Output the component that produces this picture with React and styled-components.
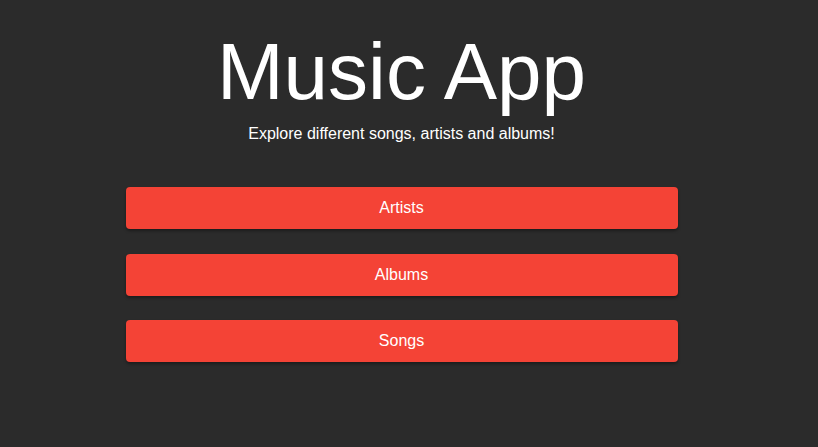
import React from "react";
import styled, { createGlobalStyle } from "styled-components";

const GlobalStyle = createGlobalStyle`
  html, body {
    margin: 0;
    padding: 0;
    background: #2b2b2b;
  }
  body {
    font-family: "Liberation Sans", Arial, sans-serif;
    color: #ffffff;
    min-height: 447px;
  }
`;

const Page = styled.main`
  width: 803px;
  padding-top: 26px;
  display: flex;
  flex-direction: column;
  align-items: center;
`;

const Title = styled.h1`
  margin: 0;
  font-size: 80px;
  font-weight: 400;
  line-height: normal;
  color: #ffffff;
`;

const Subtitle = styled.p`
  margin: 7px 0 0;
  font-size: 16px;
  line-height: normal;
  color: #ffffff;
`;

const Menu = styled.nav`
  width: 552px;
  margin-top: 44px;
  display: flex;
  flex-direction: column;
  gap: 24.5px;
`;

const MenuButton = styled.button`
  height: 42px;
  border: none;
  border-radius: 4px;
  background: #f44336;
  color: #ffffff;
  font-family: "Liberation Sans", Arial, sans-serif;
  font-size: 16px;
  box-shadow: 0 2px 3px rgba(0, 0, 0, 0.35);
  cursor: pointer;
`;

export default function App() {
  return (
    <>
      <GlobalStyle />
      <Page>
        <Title>Music App</Title>
        <Subtitle>Explore different songs, artists and albums!</Subtitle>
        <Menu>
          {["Artists", "Albums", "Songs"].map((label) => (
            <MenuButton key={label}>{label}</MenuButton>
          ))}
        </Menu>
      </Page>
    </>
  );
}
